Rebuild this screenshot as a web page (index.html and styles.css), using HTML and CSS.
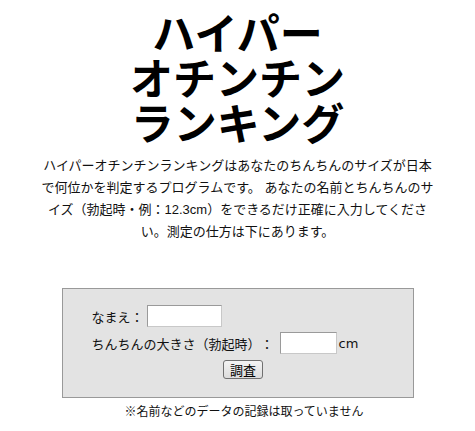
FILE: index.html
```html
<!DOCTYPE html>
<html lang="ja">
<head>
<meta charset="utf-8">
<title>ハイパーオチンチンランキング</title>
<link rel="stylesheet" href="styles.css">
</head>
<body>
<h1 class="title"><span class="title-line">ハイパー</span><span class="title-line">オチンチン</span><span class="title-line">ランキング</span></h1>
<p class="intro">ハイパーオチンチンランキングはあなたのちんちんのサイズが日本で何位かを判定するプログラムです。 あなたの名前とちんちんのサイズ（勃起時・例：12.3cm）をできるだけ正確に入力してください。測定の仕方は下にあります。</p>
<form class="form-box" onsubmit="return false;">
  <div class="row">
    <label class="label" for="name">なまえ：</label>
    <input class="field field-name" id="name" type="text">
  </div>
  <div class="row">
    <label class="label" for="size">ちんちんの大きさ（勃起時）：</label>
    <input class="field field-size" id="size" type="text">
    <span class="unit">cm</span>
  </div>
  <div class="row row-submit">
    <button class="submit" type="submit">調査</button>
  </div>
</form>
<p class="note">※名前などのデータの記録は取っていません</p>
</body>
</html>
```
FILE: styles.css
```css
html, body {
  background: #ffffff;
}
body {
  margin: 8px;
  color: #111111;
  font-family: "Liberation Sans", "Noto Sans CJK JP", sans-serif;
  font-size: 13px;
  text-spacing-trim: space-all;
}
.title {
  margin: 0;
  padding-top: 1px;
  text-align: center;
  font-family: "Noto Sans CJK JP", sans-serif;
  font-weight: 700;
  font-size: 43px;
  color: #000000;
}
.title-line {
  display: block;
  height: 45px;
  line-height: 45px;
}
.intro {
  width: 400px;
  margin: 11px auto 0;
  text-align: center;
  line-height: 22px;
}
.form-box {
  box-sizing: border-box;
  width: 352px;
  margin: 45px auto 0;
  padding: 16px 0 18px 29px;
  background: #e3e3e3;
  border: 1px solid #999999;
  display: flex;
  flex-direction: column;
  gap: 5px;
}
.row {
  display: flex;
  align-items: center;
  height: 22px;
}
.label {
  white-space: nowrap;
}
.field {
  box-sizing: border-box;
  height: 22px;
  margin: 0 0 0 3px;
  padding: 1px 2px;
  background: #ffffff;
  border: 1px solid;
  border-color: #9a9a9a #c8c8c8 #c8c8c8 #9a9a9a;
  font: inherit;
}
.field-name {
  width: 75px;
}
.field-size {
  width: 57px;
  margin-left: 6px;
}
.unit {
  margin-left: 2px;
  font-family: "DejaVu Sans", sans-serif;
  font-size: 13px;
}
.row-submit {
  justify-content: center;
  height: 19px;
  margin-top: 1px;
  padding-right: 18px;
}
.submit {
  box-sizing: border-box;
  width: 40px;
  height: 19px;
  padding: 0;
  border: 1px solid #707070;
  border-radius: 3px;
  background: linear-gradient(#f4f4f4, #dcdcdc);
  color: #000000;
  font-family: "Noto Sans CJK JP", sans-serif;
  font-size: 13px;
  line-height: 17px;
}
.note {
  margin: 6px 0 0;
  padding-left: 13px;
  text-align: center;
  font-size: 12px;
  line-height: 16px;
}
```
